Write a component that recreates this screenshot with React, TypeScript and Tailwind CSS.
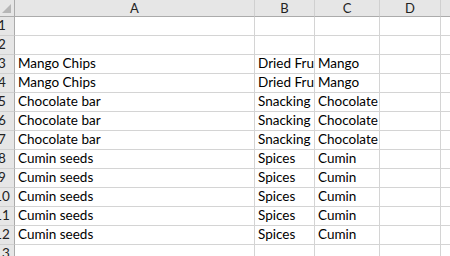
const cols = ["A", "B", "C", "D", ""];

const rows: string[][] = [
    ["", "", ""],
    ["", "", ""],
    ["Mango Chips", "Dried Fruit", "Mango"],
    ["Mango Chips", "Dried Fruit", "Mango"],
    ["Chocolate bar", "Snacking", "Chocolate"],
    ["Chocolate bar", "Snacking", "Chocolate"],
    ["Chocolate bar", "Snacking", "Chocolate"],
    ["Cumin seeds", "Spices", "Cumin"],
    ["Cumin seeds", "Spices", "Cumin"],
    ["Cumin seeds", "Spices", "Cumin"],
    ["Cumin seeds", "Spices", "Cumin"],
    ["Cumin seeds", "Spices", "Cumin"],
    ["", "", ""],
];

export default function App() {
    return (
        <div className="w-[450px] h-[256px] overflow-hidden bg-white text-black font-['Lato','Liberation_Sans',sans-serif] text-[13.5px] leading-none">
            <div className="grid grid-cols-[15px_240px_60px_65px_61px_60px] grid-rows-[17px] auto-rows-[19px]">
                {/* corner */}
                <div className="relative bg-[#e6e6e6] border-r border-b border-[#ababab] overflow-hidden">
                    <div className="absolute right-[3px] bottom-[3px] w-0 h-0 border-l-[9px] border-l-transparent border-b-[9px] border-b-[#b6b6b6]" />
                </div>
                {cols.map((c, i) => (
                    <div key={i} className="flex items-center justify-center bg-[#e6e6e6] border-r border-b border-r-[#d0d0d0] border-b-[#ababab] text-[13px] text-[#222]">
                        {c}
                    </div>
                ))}
                {rows.map((r, ri) => (
                    <>
                        <div key={`h${ri}`} className="bg-[#e6e6e6] border-r border-b border-r-[#ababab] border-b-[#d0d0d0] overflow-hidden">
                            <div className="-ml-[11px] w-[26px] h-full flex items-center justify-center text-[13.5px] text-[#222]">
                                {ri + 1}
                            </div>
                        </div>
                        {[r[0], r[1], r[2], "", ""].map((v, ci) => (
                            <div key={`${ri}-${ci}`} className="flex items-end pb-[3px] pl-[3px] border-r border-b border-[#d4d4d4] overflow-hidden whitespace-nowrap">
                                {v}
                            </div>
                        ))}
                    </>
                ))}
            </div>
        </div>
    );
}
